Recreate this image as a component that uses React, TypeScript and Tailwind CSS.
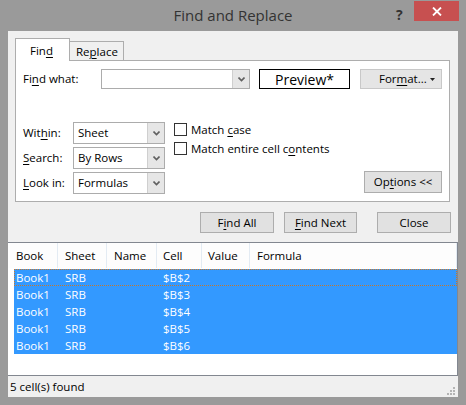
import React from 'react';

// underlined access key letter
const U: React.FC<{ children: React.ReactNode }> = ({ children }) => (
  <span className="underline underline-offset-[2px] decoration-1">{children}</span>
);

const Chevron = () => (
  <svg width="7" height="5" viewBox="0 0 7 5" className="block">
    <path d="M0.5 0.5 L3.5 3.5 L6.5 0.5" fill="none" stroke="#606060" strokeWidth="1.6" />
  </svg>
);

const Select: React.FC<{ value: string }> = ({ value }) => (
  <div className="flex w-[92px] h-[22px] border border-[#acacac] bg-white">
    <div className="flex-1 pl-[4px] flex items-center text-black">{value}</div>
    <div className="w-[17px] h-full bg-[#e6e6e6] border-l border-[#cfcfcf] flex items-center justify-center">
      <Chevron />
    </div>
  </div>
);

const Checkbox: React.FC<{ children: React.ReactNode }> = ({ children }) => (
  <div className="flex items-center h-[13px]">
    <div className="w-[13px] h-[13px] border border-[#333] bg-white" />
    <span className="ml-[4px] text-black leading-none">{children}</span>
  </div>
);

const Button: React.FC<{ className?: string; children: React.ReactNode }> = ({ className = '', children }) => (
  <div
    className={`h-[21px] flex items-center justify-center bg-[#e1e1e1] border border-[#adadad] text-black ${className}`}
  >
    {children}
  </div>
);

const rows = ['$B$2', '$B$3', '$B$4', '$B$5', '$B$6'];

export default function App() {
  return (
    <div className="w-[466px] h-[405px] bg-[#9a9a9a] flex flex-col font-['Segoe_UI','Open_Sans',sans-serif] text-[11.5px] overflow-hidden select-none">
      {/* Title bar */}
      <div className="h-[31px] flex relative">
        <div className="flex-1 flex items-center justify-center text-[15px] text-[#333] pb-[1px]">
          Find and Replace
        </div>
        <div className="absolute left-[396px] top-[4px] text-[14px] font-bold text-[#333]">?</div>
        <div className="absolute left-[414px] top-[1px] w-[45px] h-[20px] bg-[#c75050] flex items-center justify-center">
          <svg width="10" height="9" viewBox="0 0 10 9">
            <path d="M1 0.5 L9 8.5 M9 0.5 L1 8.5" stroke="#fff" strokeWidth="1.8" />
          </svg>
        </div>
      </div>

      {/* Dialog body */}
      <div className="ml-[8px] w-[450px] h-[366px] bg-[#f0f0f0] flex flex-col text-black">
        {/* Tabs */}
        <div className="flex items-end pl-[7px] h-[29px] relative z-10">
          <div className="w-[55px] h-[23px] bg-white border border-[#adadad] border-b-0 -mb-px pl-[14px] pt-[3px]">
            Fin<U>d</U>
          </div>
          <div className="w-[55px] h-[19px] -ml-px bg-[#f0f0f0] border border-[#adadad] border-b-0 pl-[6px] pt-[1px]">
            Re<U>p</U>lace
          </div>
        </div>

        {/* Tab panel */}
        <div className="ml-[7px] w-[435px] h-[142px] bg-white border border-[#adadad] flex flex-col">
          <div className="flex items-center mt-[8px] ml-[7px] h-[20px]">
            <div className="w-[78px]">
              Fi<U>n</U>d what:
            </div>
            <div className="w-[149px] h-[20px] border border-[#acacac] flex justify-end bg-white">
              <div className="w-[17px] h-full bg-[#e6e6e6] border-l border-[#cfcfcf] flex items-center justify-center">
                <Chevron />
              </div>
            </div>
            <div className="ml-[9px] w-[91px] h-[20px] border border-black flex items-center justify-center text-[14px]">
              Preview*
            </div>
            <div className="ml-[10px] w-[82px] h-[20px] bg-[#e5e5e5] border border-[#c8c8c8] flex items-center relative">
              <span className="ml-[18px]">
                For<U>m</U>at...
              </span>
              <svg width="5" height="3" viewBox="0 0 5 3" className="absolute right-[6px] top-[8px]">
                <path d="M0 0 H5 L2.5 3 Z" fill="#222" />
              </svg>
            </div>
          </div>

          <div className="flex mt-[33px] ml-[7px]">
            <div className="flex flex-col gap-[3px]">
              <div className="flex items-center h-[22px]">
                <div className="w-[50px]">
                  Wit<U>h</U>in:
                </div>
                <Select value="Sheet" />
              </div>
              <div className="flex items-center h-[22px]">
                <div className="w-[50px]">
                  <U>S</U>earch:
                </div>
                <Select value="By Rows" />
              </div>
              <div className="flex items-center h-[22px]">
                <div className="w-[50px]">
                  <U>L</U>ook in:
                </div>
                <Select value="Formulas" />
              </div>
            </div>

            <div className="flex flex-col ml-[9px] mt-[1px] gap-[6px]">
              <Checkbox>
                Match <U>c</U>ase
              </Checkbox>
              <Checkbox>
                Match entire cell c<U>o</U>ntents
              </Checkbox>
            </div>

            <div className="ml-auto mr-[7px] mt-[49px]">
              <Button className="w-[78px] h-[22px]">
                Op<U>t</U>ions &lt;&lt;
              </Button>
            </div>
          </div>
        </div>

        {/* Action buttons */}
        <div className="flex justify-end pr-[7px] mt-[10px] h-[21px]">
          <Button className="w-[74px]">
            F<U>i</U>nd All
          </Button>
          <Button className="w-[73px] ml-[10px] border-[#3c8fe0]">
            <U>F</U>ind Next
          </Button>
          <Button className="w-[74px] ml-[20px]">Close</Button>
        </div>

        {/* Results list */}
        <div className="mt-[9px] h-[134px] bg-white border-t border-r border-b border-[#828790] flex flex-col">
          <div className="flex h-[25px] items-center bg-[#fdfdfd]">
            <div className="w-[50px] pl-[8px] h-full flex items-center border-r border-[#e3ebf3]">Book</div>
            <div className="w-[49px] pl-[7px] h-full flex items-center border-r border-[#e3ebf3]">Sheet</div>
            <div className="w-[50px] pl-[7px] h-full flex items-center border-r border-[#e3ebf3]">Name</div>
            <div className="w-[45px] pl-[6px] h-full flex items-center border-r border-[#e3ebf3]">Cell</div>
            <div className="w-[48px] pl-[6px] h-full flex items-center border-r border-[#e3ebf3]">Value</div>
            <div className="flex-1 pl-[7px] h-full flex items-center border-r border-[#e3ebf3]">Formula</div>
          </div>
          <div className="ml-[6px] mt-[1px] flex flex-col text-white">
            {rows.map((cell, i) => (
              <div
                key={cell}
                className={`flex h-[17px] items-center bg-[#3399ff] border border-dotted ${
                  i === 0 ? 'border-[#c8782a]' : 'border-transparent'
                }`}
              >
                <div className="w-[43px] pl-[1px]">Book1</div>
                <div className="w-[49px] pl-[7px]">SRB</div>
                <div className="w-[50px]" />
                <div className="w-[45px] pl-[6px]">{cell}</div>
              </div>
            ))}
          </div>
        </div>

        {/* Status bar */}
        <div className="flex-1 flex items-center pl-[2px] relative">
          <span>5 cell(s) found</span>
          <svg width="8" height="8" viewBox="0 0 8 8" className="absolute right-[3px] bottom-[2px]">
            <g fill="#b4b4b4">
              <rect x="6" y="0" width="2" height="2" />
              <rect x="3" y="3" width="2" height="2" />
              <rect x="6" y="3" width="2" height="2" />
              <rect x="0" y="6" width="2" height="2" />
              <rect x="3" y="6" width="2" height="2" />
              <rect x="6" y="6" width="2" height="2" />
            </g>
          </svg>
        </div>
      </div>
    </div>
  );
}
